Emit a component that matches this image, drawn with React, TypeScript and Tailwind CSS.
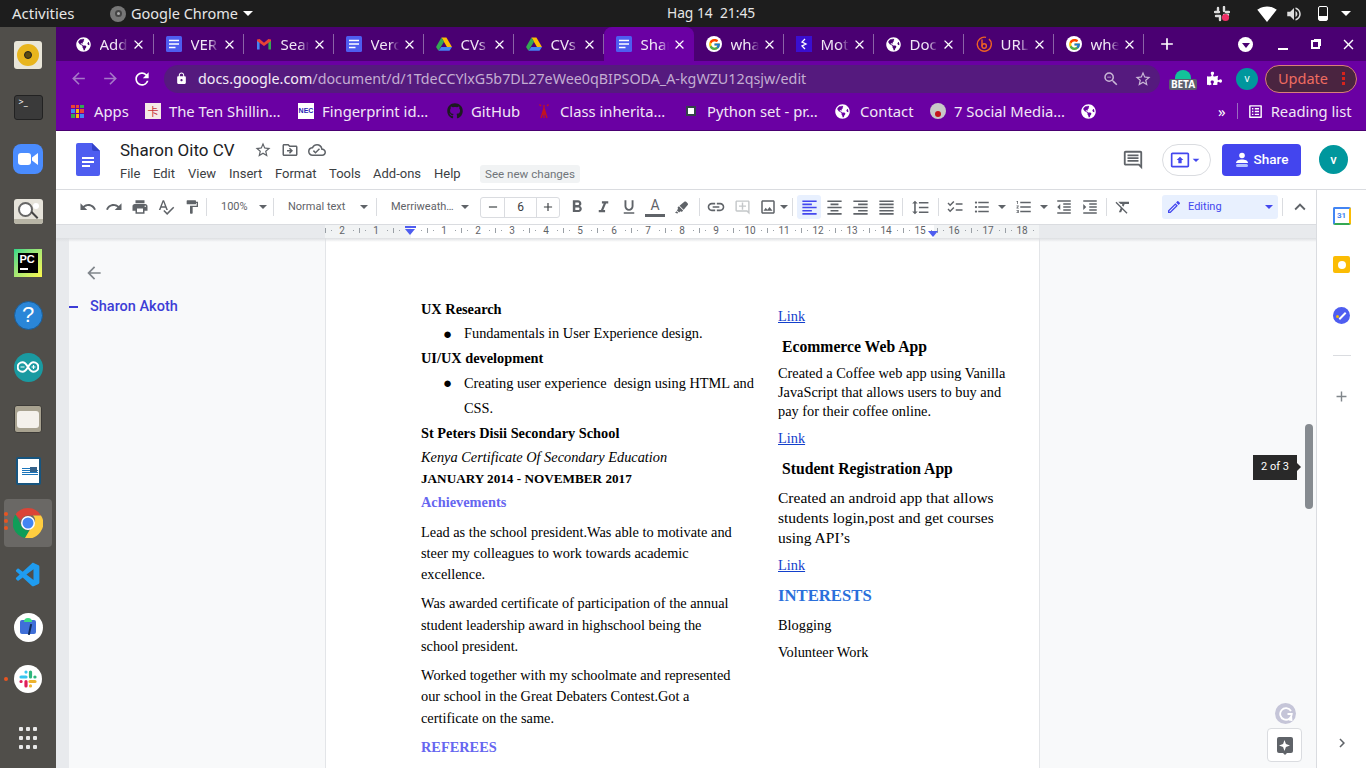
import type { ReactNode } from 'react'
import { FaGithub, FaGlobeAmericas, FaHighlighter, FaPuzzlePiece } from 'react-icons/fa'
import { FcGoogle } from 'react-icons/fc'
import { VscVscode } from 'react-icons/vsc'
import {
  MdAdd, MdArrowBack, MdArrowDropDown, MdArrowForward, MdChecklist, MdChevronRight, MdClose,
  MdExpandLess, MdFormatAlignCenter, MdFormatAlignJustify, MdFormatAlignLeft, MdFormatAlignRight,
  MdFormatBold, MdFormatClear, MdFormatIndentDecrease, MdFormatIndentIncrease, MdFormatItalic,
  MdFormatLineSpacing, MdFormatListBulleted, MdFormatListNumbered, MdFormatPaint, MdFormatUnderlined, MdLink,
  MdLock, MdOutlineAddComment, MdOutlineCloudDone, MdOutlineComment, MdOutlineDriveFileMove, MdOutlineEdit, MdOutlineImage,
  MdOutlineListAlt, MdOutlinePresentToAll, MdPrint, MdRedo, MdRefresh, MdRemove, MdSignalWifi4Bar, MdSpellcheck,
  MdStarBorder, MdUndo, MdVolumeUp, MdZoomOut,
} from 'react-icons/md'

const ubuntu = "font-['Noto_Sans',sans-serif]"

function DocsIcon({ size = 16 }: { size?: number }) {
  return (
    <svg width={size} height={size} viewBox="0 0 16 16" className="shrink-0">
      <rect width="16" height="16" rx="1.5" fill="#4e5df0" />
      <path d="M3 4.5h10M3 8h10M3 11.5h6.5" stroke="#fff" strokeWidth="1.6" />
    </svg>
  )
}

function DriveIcon() {
  return (
    <svg width="16" height="16" viewBox="0 0 16 16" className="shrink-0">
      <path d="M5.4 1.5h5L16 11h-5z" fill="#fbbc04" />
      <path d="M5.4 1.5 0 11l2.5 3.8L8 5.8z" fill="#34a853" />
      <path d="M5.3 11H16l-2.5 3.8H2.5z" fill="#4285f4" />
    </svg>
  )
}

function GmailIcon() {
  return (
    <svg width="16" height="16" viewBox="0 0 16 16" className="shrink-0">
      <path d="M1 13.5V4l2.6.6v8.9z" fill="#4285f4" />
      <path d="M15 13.5V4l-2.6.6v8.9z" fill="#34a853" />
      <path d="M1 3.4 3.6 3 8 6.8 12.4 3l2.6.4v1.5L8 10 1 4.9z" fill="#ea4335" />
    </svg>
  )
}

function Globe() {
  return <FaGlobeAmericas size={15} className="shrink-0 text-white" />
}

const tabs: { icon: ReactNode; label: string; active?: boolean }[] = [
  { icon: <Globe />, label: 'Add' },
  { icon: <DocsIcon />, label: 'VER' },
  { icon: <GmailIcon />, label: 'Sear' },
  { icon: <DocsIcon />, label: 'Verc' },
  { icon: <DriveIcon />, label: 'CVs' },
  { icon: <DriveIcon />, label: 'CVs' },
  { icon: <DocsIcon />, label: 'Shar', active: true },
  { icon: <span className="flex size-4 shrink-0 items-center justify-center rounded-full bg-white"><FcGoogle size={13} /></span>, label: 'wha' },
  {
    icon: (
      <span className="flex size-4 shrink-0 items-center justify-center bg-[#3a0fd0]">
        <svg width="8" height="12" viewBox="0 0 8 12" fill="none" stroke="#fff" strokeWidth="1.300">
          <path d="M5 1 2 4l4 2-4 2 3 3" />
        </svg>
      </span>
    ),
    label: 'Mot',
  },
  { icon: <Globe />, label: 'Doc' },
  {
    icon: (
      <svg width="16" height="16" viewBox="0 0 16 16" fill="none" stroke="#ee6123" strokeWidth="1.4" className="shrink-0">
        <path d="M13 3a7 7 0 1 1-3-1.6" />
        <path d="M6 3.5v7" />
        <circle cx="8.2" cy="10" r="2.2" />
      </svg>
    ),
    label: 'URL',
  },
  { icon: <span className="flex size-4 shrink-0 items-center justify-center rounded-full bg-white"><FcGoogle size={13} /></span>, label: 'whe' },
]

function Tab({ icon, label, active }: { icon: ReactNode; label: string; active?: boolean }) {
  return (
    <div className={`relative flex h-[34px] w-[90px] shrink-0 items-center pl-3 ${active ? 'rounded-t-lg bg-[#6a00a3]' : ''}`}>
      {icon}
      <span className="ml-[8.500px] w-7 overflow-hidden whitespace-nowrap text-[15px] text-[#f0e6f5] [mask-image:linear-gradient(90deg,#000_65%,transparent)]">
        {label}
      </span>
      <MdClose size={15} className="ml-[3.500px] text-white" />
      {!active && <span className="absolute right-0 top-[7px] h-5 w-px bg-[#8a63a6]" />}
    </div>
  )
}

function Bookmark({ icon, label, className }: { icon: ReactNode; label?: string; className: string }) {
  return (
    <div className={`flex items-center ${className}`}>
      {icon}
      {label && <span className="whitespace-nowrap text-[14.800px] text-[#f1e7f6]">{label}</span>}
    </div>
  )
}

function TopBar() {
  return (
    <div className={`flex h-[27px] shrink-0 items-center bg-[#1d1d1d] text-[14.500px] text-[#e6e6e6] ${ubuntu}`}>
      <span className="ml-3 w-[98px] text-[15px]">Activities</span>
      <span className="flex size-4 items-center justify-center rounded-full bg-[#777]">
        <span className="size-[7px] rounded-full border-2 border-[#444] bg-[#aaa]" />
      </span>
      <span className="ml-[5px]">Google Chrome</span>
      <span className="ml-[5px] size-0 border-x-[5px] border-t-[5px] border-x-transparent border-t-white" />
      <span className="ml-[408px] w-[100px] whitespace-nowrap text-center text-[13.800px]">Hag 14&nbsp; 21:45</span>
      <div className="ml-[453px] flex items-center">
        <svg width="16" height="16" viewBox="0 0 16 16" className="mr-[27px]">
          <path d="M1 6h4M4 2v3M10 1v4M12 6h3M2 10h4M6 10v4M10 9h4" stroke="#ddd" strokeWidth="2.4" strokeLinecap="round" />
          <circle cx="11.5" cy="11.5" r="3.6" fill="#ef2f66" />
        </svg>
        <MdSignalWifi4Bar size={20} className="text-white" />
        <MdVolumeUp size={18} className="ml-[8px] text-[#ddd]" />
        <span className="relative ml-[15px] h-[15px] w-[10px] rounded-[2px] border border-white">
          <span className="absolute inset-x-0 bottom-0 h-1 bg-white" />
        </span>
        <span className="ml-[13px] size-0 border-x-[5px] border-t-[5px] border-x-transparent border-t-white" />
      </div>
    </div>
  )
}

const dockClass = 'flex h-[52px] items-center justify-center relative'

function Dock() {
  return (
    <div className="flex w-14 shrink-0 flex-col bg-[#504e4a] pt-[2px]">
      <div className={dockClass}>
        <span className="flex size-7 items-center justify-center rounded-[3px] bg-[#e9e6d9]">
          <span className="flex size-[22px] items-center justify-center rounded-full bg-[#e8b51d]">
            <span className="size-2 rounded-full border border-[#222] bg-[#5b4a12]" />
          </span>
        </span>
      </div>
      <div className={dockClass}>
        <span className="h-[25px] w-[29px] rounded-[3px] border border-[#222] bg-[#3a3a3a] pl-1 text-[9px] leading-[12px] text-white">&gt;_</span>
      </div>
      <div className={dockClass}>
        <span className="flex size-[30px] items-center justify-center rounded-lg bg-[#4a8cff]">
          <svg width="20" height="12" viewBox="0 0 20 12" fill="#fff">
            <rect width="13" height="12" rx="3" />
            <path d="M14 4.5 20 0v12l-6-4.5z" />
          </svg>
        </span>
      </div>
      <div className={dockClass}>
        <span className="relative flex h-[25px] w-[29px] items-center rounded-[3px] bg-[#e6e3da] pl-[4px]">
          <span className="mb-[3px] size-[15px] rounded-full border-2 border-[#666] bg-white" />
          <span className="absolute left-[16px] top-[15px] h-[2px] w-[9px] rotate-45 bg-[#444]" />
          <span className="absolute right-1 top-1 size-[6px] rounded-full bg-white" />
          <span className="absolute bottom-0 left-0 h-[5px] w-full rounded-b-[3px] bg-[#b8b5a6]" />
        </span>
      </div>
      <div className={dockClass}>
        <span className="flex size-7 items-center justify-center bg-gradient-to-br from-[#21d789] to-[#fcf84a] pr-[1px]">
          <span className="flex size-5 flex-col bg-black pl-[2px] font-['Liberation_Sans',sans-serif] text-[11px] font-bold leading-[13px] text-white">
            PC
            <span className="mt-[2px] h-[1.5px] w-2 bg-white" />
          </span>
        </span>
      </div>
      <div className={dockClass}>
        <span className="flex size-[29px] items-center justify-center rounded-full border border-[#1c5c94] bg-[#2a86d8] font-['Liberation_Sans',sans-serif] text-[22px] leading-none text-white">?</span>
      </div>
      <div className={dockClass}>
        <span className="flex size-[29px] items-center justify-center rounded-full bg-[#1a9aa1]">
          <svg width="22" height="12" viewBox="0 0 22 12" fill="none" stroke="#fff" strokeWidth="2">
            <path d="M11 6C9 2.5 7.5 1.2 5.5 1.2a4.8 4.8 0 0 0 0 9.6C7.5 10.8 9 9.5 11 6c2-3.5 3.5-4.8 5.5-4.8a4.8 4.8 0 0 1 0 9.6C14.500 10.800 13 9.500 11 6z" />
            <path d="M3.500 6h4M14.500 6h4M16.500 4v4" strokeWidth="1.200" />
          </svg>
        </span>
      </div>
      <div className={dockClass}>
        <span className="flex h-7 w-7 items-center justify-center rounded-[3px] border border-[#3d3b38] bg-[#a8a290]">
          <span className="h-[17px] w-[22px] rounded-[3px] bg-[#f4f1ec]" />
        </span>
      </div>
      <div className={dockClass}>
        <span className="relative flex h-7 w-[25px] flex-col justify-center gap-[1px] rounded-[2px] border-2 border-[#17557f] bg-white pl-1">
          <span className="h-px w-2 bg-[#1b75bb]" />
          <span className="h-px w-4 bg-[#1b75bb]" />
          <span className="h-px w-4 bg-[#1b75bb]" />
          <span className="h-px w-4 bg-[#1b75bb]" />
          <span className="absolute right-[2px] top-2 h-[5px] w-[7px] bg-[#33618a]" />
        </span>
      </div>
      <div className={dockClass}>
        <span className="absolute inset-x-1 inset-y-[2px] rounded-[4px] bg-white/15" />
        <span className="absolute left-1 top-[15px] flex flex-col gap-[3px]">
          <i className="size-1 rounded-full bg-[#e95420]" />
          <i className="size-1 rounded-full bg-[#e95420]" />
          <i className="size-1 rounded-full bg-[#e95420]" />
        </span>
        <svg width="30" height="30" viewBox="0 0 30 30" className="relative">
          <path d="M15 0a15 15 0 0 1 13 7.500H15a7.500 7.500 0 0 0-7 4.700L2.500 6.500A15 15 0 0 1 15 0z" fill="#db4437" />
          <path d="M2.500 6.500 8.800 18.500a7.500 7.500 0 0 0 7.500 3.900L12 30A15 15 0 0 1 2.500 6.500z" fill="#0f9d58" />
          <path d="M28 7.500A15 15 0 0 1 12 30l6.300-10.800A7.500 7.500 0 0 0 20 7.500z" fill="#ffcd40" />
          <circle cx="15" cy="15" r="7" fill="#fff" />
          <circle cx="15" cy="15" r="5.500" fill="#4285f4" />
        </svg>
      </div>
      <div className={dockClass}>
        <VscVscode size={29} className="text-[#1f9cf0]" />
      </div>
      <div className={dockClass}>
        <span className="relative flex size-[29px] items-center justify-center rounded-full bg-white">
          <span className="h-[14px] w-4 rounded-[2px] bg-[#3f6fd8]" />
          <span className="absolute top-[5px] h-1 w-2 rounded-t-full bg-[#3ddc84]" />
          <span className="absolute left-[15px] top-[11px] h-[11px] w-[2px] rotate-12 bg-[#0d2a5c]" />
        </span>
      </div>
      <div className={dockClass}>
        <span className="absolute left-1 size-1 rounded-full bg-[#e95420]" />
        <span className="flex size-[28px] items-center justify-center rounded-full bg-white">
          <svg width="18" height="18" viewBox="0 0 18 18" strokeWidth="3.200" strokeLinecap="round">
            <path d="M7 2v.1M2 7h5" stroke="#36c5f0" />
            <path d="M11.500 2v5M16 7h-.1" stroke="#2eb67d" />
            <path d="M16 11.500h-5M11.500 16v-.1" stroke="#ecb22e" />
            <path d="M7 11.500V16M2 11.500h.1" stroke="#e01e5a" />
          </svg>
        </span>
      </div>
      <div className="mt-auto mb-[19px] grid w-full grid-cols-3 justify-items-center gap-y-[5px] px-[18px]">
        {Array.from({ length: 9 }).map((_, i) => (
          <span key={i} className="size-1 rounded-[1px] bg-[#e8e8e8]" />
        ))}
      </div>
    </div>
  )
}

function ChromeBars() {
  return (
    <div className={ubuntu}>
      <div className="flex h-[34px] items-center bg-[#4a0072] pl-2">
        {tabs.map((t, i) => (
          <Tab key={i} icon={t.icon} label={t.label} active={t.active} />
        ))}
        <MdAdd size={20} className="ml-[13px] text-white" />
        <span className="ml-[61px] flex size-[15px] items-center justify-center rounded-full bg-white">
          <span className="mt-[2px] size-0 border-x-[4px] border-t-[5px] border-x-transparent border-t-[#4a0072]" />
        </span>
        <span className="ml-[25px] mt-[10px] h-[2px] w-[10px] bg-white" />
        <span className="relative ml-[23px] size-[9px] border-2 border-white">
          <span className="absolute -right-[3px] -top-[3px] size-[7px] border-r-2 border-t-2 border-white" />
        </span>
        <MdClose size={17} className="ml-[20px] text-white" />
      </div>
      <div className="flex h-[33px] items-center bg-[#6a00a3] pl-[13px] pt-[2px]">
        <MdArrowBack size={19} className="text-[#a678c8]" />
        <MdArrowForward size={19} className="ml-[13px] text-[#a678c8]" />
        <MdRefresh size={20} className="ml-[12px] text-white" />
        <div className="ml-3 flex h-[28px] w-[996px] items-center rounded-full bg-[#551a7e] pl-[11px] text-[14.300px]">
          <MdLock size={13} className="text-white" />
          <span className="ml-[10px] whitespace-nowrap text-[#f3ecf7]">docs.google.com</span>
          <span className="whitespace-nowrap text-[#c3aed2]">/document/d/1TdeCCYlxG5b7DL27eWee0qBIPSODA_A-kgWZU12qsjw/edit</span>
          <span className="flex-1" />
          <MdZoomOut size={18} className="text-[#c9b7d6]" />
          <MdStarBorder size={18} className="ml-[14px] mr-2 text-[#c9b7d6]" />
        </div>
        <span className="relative ml-[13px] flex w-5 justify-center">
          <span className="h-[17px] w-4 rounded-t-full bg-[#12c39a]" />
          <span className="absolute -bottom-[3px] rounded-[2px] bg-[#5b5f6e] px-[2px] text-[10px] font-bold leading-[11px] text-white">BETA</span>
        </span>
        <FaPuzzlePiece size={15} className="ml-[14px] text-white" />
        <span className="ml-[14px] flex size-[22px] items-center justify-center rounded-full bg-[#00979d] text-[10px] text-white">v</span>
        <span className="ml-[7px] flex h-[28px] w-[92px] items-center rounded-full border border-[#d97f78] bg-[#4a2440] pl-3 text-[14.500px] text-[#ef6c61]">
          Update
          <span className="ml-[14px] flex flex-col gap-[2px]">
            <i className="size-[3px] bg-[#d8231c]" />
            <i className="size-[3px] bg-[#d8231c]" />
            <i className="size-[3px] bg-[#d8231c]" />
          </span>
        </span>
      </div>
      <div className="flex h-[36px] items-center bg-[#6a00a3] pb-[2px] pl-[15px]">
        <Bookmark
          className="w-[74px]"
          icon={
            <span className="mr-[10px] grid size-[13px] grid-cols-3 gap-[1px]">
              {['#ea4335', '#ea4335', '#34a853', '#4285f4', '#fbbc04', '#ea4335', '#34a853', '#fbbc04', '#4285f4'].map((c, i) => (
                <i key={i} style={{ background: c }} />
              ))}
            </span>
          }
          label="Apps"
        />
        <Bookmark className="w-[153px]" icon={<span className="mr-2 flex size-4 items-center justify-center bg-[#f6e9e6] font-['Noto_Sans_CJK_SC',sans-serif] text-[11px] text-[#c8333a]">卡</span>} label="The Ten Shillin…" />
        <Bookmark className="w-[149px]" icon={<span className="mr-2 flex size-4 items-center justify-center bg-white font-['Liberation_Sans',sans-serif] text-[7px] font-bold text-[#2a1fb5]">NEC</span>} label="Fingerprint id…" />
        <Bookmark className="w-[89px]" icon={<FaGithub size={16} className="mr-2 text-[#1b1b1f]" />} label="GitHub" />
        <Bookmark
          className="w-[147px]"
          icon={
            <svg width="16" height="16" viewBox="0 0 16 16" fill="none" stroke="#c4141c" strokeWidth="1.300" className="mr-2">
              <path d="M8 2v13M8 5 5 15M8 5l3 10M5 3 3.500 1.500M11 3l1.500-1.500M6 11h4" />
            </svg>
          }
          label="Class inherita…"
        />
        <Bookmark
          className="w-[152px]"
          icon={
            <span className="mr-2 flex size-4 items-center justify-center">
              <span className="size-[10px] border-2 border-[#33424a] bg-white" />
            </span>
          }
          label="Python set - pr…"
        />
        <Bookmark className="w-[95px]" icon={<span className="mr-[10px]"><Globe /></span>} label="Contact" />
        <Bookmark
          className="w-[151px]"
          icon={
            <span className="mr-2 flex size-4 items-end justify-center rounded-full bg-[#c8c8c8]">
              <span className="mb-[2px] size-[6px] rounded-full bg-[#c4141c]" />
            </span>
          }
          label="7 Social Media…"
        />
        <Globe />
        <span className="ml-[122px] text-[15px] leading-none text-white">»</span>
        <span className="ml-[11px] h-4 w-px bg-[#9a6cc0]" />
        <MdOutlineListAlt size={17} className="ml-[9px] text-white" />
        <span className="ml-[7px] whitespace-nowrap text-[14.800px] text-[#f1e7f6]">Reading list</span>
      </div>
    </div>
  )
}

const menus: [string, string][] = [
  ['File', 'w-[33px]'],
  ['Edit', 'w-[35px]'],
  ['View', 'w-[41px]'],
  ['Insert', 'w-[46px]'],
  ['Format', 'w-[54px]'],
  ['Tools', 'w-[44px]'],
  ['Add-ons', 'w-[61px]'],
  ['Help', 'w-[46px]'],
]

function DocsHeader() {
  return (
    <div className="flex h-[60px] shrink-0 items-center border-b border-t border-b-[#dadce0] border-t-[#4a0072] bg-white pb-px pl-5 font-['Roboto',sans-serif]">
      <svg width="24" height="33" viewBox="0 0 24 33" className="shrink-0">
        <path d="M2 0h14l8 8v23a2 2 0 0 1-2 2H2a2 2 0 0 1-2-2V2a2 2 0 0 1 2-2z" fill="#4e5df0" />
        <path d="M16 0l8 8h-6a2 2 0 0 1-2-2z" fill="#3343c9" />
        <path d="M6 15h12M6 19h12M6 23h8" stroke="#fff" strokeWidth="1.800" />
      </svg>
      <div className="ml-5 flex flex-col pt-[2px]">
        <div className="flex items-center">
          <span className="w-[133px] text-[17px] leading-6 text-[#202124]">Sharon Oito CV</span>
          <MdStarBorder size={18} className="ml-[1px] text-[#5f6368]" />
          <MdOutlineDriveFileMove size={18} className="ml-[9px] text-[#5f6368]" />
          <MdOutlineCloudDone size={18} className="ml-[9px] text-[#5f6368]" />
        </div>
        <div className="mt-[3px] flex h-[18px] items-center text-[13px] text-[#3c4043]">
          {menus.map(([m, w]) => (
            <span key={m} className={w}>{m}</span>
          ))}
          <span className="whitespace-nowrap rounded-[3px] bg-[#f1f3f4] px-[5px] py-[2px] text-[11.600px] leading-[14px] text-[#70757a]">See new changes</span>
        </div>
      </div>
      <div className="ml-auto flex items-center">
        <MdOutlineComment size={22} className="text-[#5f6368]" />
        <span className="ml-[18px] flex h-8 w-[49px] items-center justify-center rounded-full border border-[#dadce0]">
          <MdOutlinePresentToAll size={20} className="text-[#4347ee]" />
          <MdArrowDropDown size={16} className="-ml-[2px] text-[#4347ee]" />
        </span>
        <span className="ml-[11px] flex h-8 w-[79px] items-center justify-center gap-[5px] rounded-[4px] bg-[#4345ee] text-[13.500px] font-medium text-white">
          <svg width="14" height="16" viewBox="0 0 14 16" fill="#fff">
            <circle cx="7" cy="3.500" r="2.800" />
            <path d="M1 11c0-2.400 3-3.500 6-3.500s6 1.100 6 3.500z" />
            <rect x="1" y="12" width="12" height="3" rx="1.500" fill="#b5c3ff" />
          </svg>
          Share
        </span>
        <span className="ml-[18px] mr-[18px] flex size-[29px] items-center justify-center rounded-full bg-[#00979d] text-[13px] font-medium text-white">v</span>
      </div>
    </div>
  )
}

function TBtn({ children, className = 'w-[26px]' }: { children: ReactNode; className?: string }) {
  return <span className={`flex h-6 shrink-0 items-center justify-center text-[#5f6368] ${className}`}>{children}</span>
}

function Sep({ className = '' }: { className?: string }) {
  return <span className={`h-[18px] w-px shrink-0 bg-[#dadce0] ${className}`} />
}

function Caret({ className = '' }: { className?: string }) {
  return <span className={`size-0 shrink-0 border-x-[4px] border-t-[4px] border-x-transparent border-t-[#5f6368] ${className}`} />
}

function Toolbar() {
  return (
    <div className="flex h-[34px] shrink-0 items-center pl-[19px] font-['Roboto',sans-serif] text-[11px] text-[#5f6368]">
      <TBtn><MdUndo size={18} /></TBtn>
      <TBtn><MdRedo size={18} /></TBtn>
      <TBtn><MdPrint size={18} /></TBtn>
      <TBtn><MdSpellcheck size={18} /></TBtn>
      <TBtn><MdFormatPaint size={16} /></TBtn>
      <Sep className="ml-[1px]" />
      <span className="flex w-[66px] items-center pl-[14px]">100%<Caret className="ml-[11px]" /></span>
      <Sep />
      <span className="flex w-[102px] items-center whitespace-nowrap pl-[14px]">Normal text<Caret className="ml-[15px]" /></span>
      <Sep />
      <span className="flex w-[99px] items-center whitespace-nowrap pl-[14px]">Merriweath…<Caret className="ml-[7px]" /></span>
      <span className="ml-[4px] flex h-[21px] w-[80px] items-center rounded-[3px] border border-[#dadce0] text-[12px] text-[#3c4043]">
        <span className="flex h-full w-6 items-center justify-center border-r border-[#dadce0]"><MdRemove size={14} /></span>
        <span className="flex-1 text-center">6</span>
        <span className="flex h-full w-[23px] items-center justify-center border-l border-[#dadce0]"><MdAdd size={14} /></span>
      </span>
      <span className="w-1" />
      <TBtn><MdFormatBold size={20} /></TBtn>
      <TBtn><MdFormatItalic size={19} /></TBtn>
      <TBtn><MdFormatUnderlined size={18} /></TBtn>
      <span className="flex w-[26px] flex-col items-center text-[14px] leading-[15px] text-[#5f6368]">
        A
        <span className="mt-[1px] h-[3px] w-5 bg-[#5f6368]" />
      </span>
      <TBtn><FaHighlighter size={13} /></TBtn>
      <Sep className="ml-[5px] mr-[3px]" />
      <TBtn><MdLink size={20} /></TBtn>
      <TBtn><MdOutlineAddComment size={17} className="text-[#c4c7c9]" /></TBtn>
      <TBtn className="w-[36px]"><MdOutlineImage size={18} /><Caret className="ml-[3px]" /></TBtn>
      <Sep className="ml-[1px] mr-[4px]" />
      <span className="flex h-6 w-6 shrink-0 items-center justify-center rounded-[3px] bg-[#e8f0fe] text-[#4347ee]"><MdFormatAlignLeft size={19} /></span>
      <TBtn><MdFormatAlignCenter size={19} /></TBtn>
      <TBtn><MdFormatAlignRight size={19} /></TBtn>
      <TBtn><MdFormatAlignJustify size={19} /></TBtn>
      <Sep className="ml-[3px] mr-[4px]" />
      <TBtn><MdFormatLineSpacing size={19} /></TBtn>
      <Sep className="ml-[5px] mr-[3px]" />
      <TBtn><MdChecklist size={18} /></TBtn>
      <TBtn className="w-[42px]"><MdFormatListBulleted size={18} /><Caret className="ml-[7px]" /></TBtn>
      <TBtn className="w-[42px]"><MdFormatListNumbered size={18} /><Caret className="ml-[7px]" /></TBtn>
      <TBtn className="-ml-px w-[26px]"><MdFormatIndentDecrease size={18} /></TBtn>
      <TBtn><MdFormatIndentIncrease size={18} /></TBtn>
      <Sep className="ml-[3px] mr-[3px]" />
      <TBtn><MdFormatClear size={18} /></TBtn>
      <span className="ml-[26px] flex h-6 w-[116px] shrink-0 items-center rounded-[3px] bg-[#e8f0fe] pl-[4px] text-[#4347ee]">
        <MdOutlineEdit size={16} />
        <span className="ml-[6px] text-[11px]">Editing</span>
        <span className="ml-auto mr-[5px] size-0 border-x-[4px] border-t-[4px] border-x-transparent border-t-[#4347ee]" />
      </span>
      <Sep className="ml-[4px]" />
      <TBtn className="ml-[4px] w-[26px]"><MdExpandLess size={22} /></TBtn>
    </div>
  )
}

const rulerCells = ['2', '1', '', '1', '2', '3', '4', '5', '6', '7', '8', '9', '10', '11', '12', '13', '14', '15', '16', '17', '18']

function Ruler() {
  return (
    <div className="relative flex h-[14px] shrink-0 border-t border-[#dadce0] bg-[#e8eaed] font-['Roboto',sans-serif] text-[10px] leading-[11px] text-[#5f6368]">
      <div className="ml-[269px] flex w-[714px] items-start bg-[linear-gradient(90deg,#f1f3f4_86px,#fff_86px,#fff_609px,#f1f3f4_609px)]">
        {rulerCells.map((n, i) => (
          <div key={i} className="flex h-[11px] w-[34px] items-center justify-between">
            <i className="h-[5px] w-px bg-[#9aa0a6]" />
            <i className="size-px bg-[#9aa0a6]" />
            <span className="w-3 text-center">{n}</span>
            <i className="size-px bg-[#9aa0a6]" />
            <span className="w-px" />
          </div>
        ))}
      </div>
      <span className="absolute left-[349px] top-[1px] h-[2px] w-[11px] bg-[#4e5df0]" />
      <span className="absolute left-[349px] top-[4px] size-0 border-x-[5.5px] border-t-[6px] border-x-transparent border-t-[#4e5df0]" />
      <span className="absolute left-[872px] top-[6px] size-0 border-x-[5.5px] border-t-[6px] border-x-transparent border-t-[#4e5df0]" />
    </div>
  )
}

const body = 'text-[14.350px] text-black'

function LeftColumn() {
  return (
    <div className={`w-[357px] shrink-0 pt-[59px] ${body}`}>
      <p className="font-bold leading-6">UX Research</p>
      <div className="mt-px flex h-6 items-center">
        <span className="ml-[22px] w-[21px] text-[15px]">●</span>
        <span>Fundamentals in User Experience design.</span>
      </div>
      <p className="font-bold leading-6">UI/UX development</p>
      <div className="mt-px flex leading-[25px]">
        <span className="ml-[22px] w-[21px] shrink-0 text-[15px]">●</span>
        <span>Creating user experience&nbsp; design using HTML and CSS.</span>
      </div>
      <p className="font-bold leading-[25px]">St Peters Disii Secondary School</p>
      <p className="-mt-px italic leading-6">Kenya Certificate Of Secondary Education</p>
      <p className="mt-px text-[13.200px] font-bold leading-[18px]">JANUARY 2014 - NOVEMBER 2017</p>
      <p className="mt-[2px] font-bold leading-6 text-[#6666f0]">Achievements</p>
      <p className="mt-[8px] w-[320px] leading-[21px]">Lead as the school president.Was able to motivate and steer my colleagues to work towards academic excellence.</p>
      <p className="mt-2 w-[320px] leading-[21.500px]">Was awarded certificate of participation of the annual student leadership award in highschool being the school president.</p>
      <p className="mt-[7px] w-[320px] leading-[21.500px]">Worked together with my schoolmate and represented our school in the Great Debaters Contest.Got a certificate on the same.</p>
      <p className="mt-[6px] font-bold leading-6 text-[#6666f0]">REFEREES</p>
    </div>
  )
}

function DocLink() {
  return <a className="text-[#1340cc] underline">Link</a>
}

function RightColumn() {
  return (
    <div className={`w-[240px] shrink-0 pt-[69px] ${body}`}>
      <p className="leading-[18px]"><DocLink /></p>
      <p className="ml-1 mt-[10px] text-[15.700px] font-bold leading-6">Ecommerce Web App</p>
      <p className="mt-[5px] w-[232px] leading-[19px]">Created a Coffee web app using Vanilla JavaScript that allows users to buy and pay for their coffee online.</p>
      <p className="mt-[8px] leading-[18px]"><DocLink /></p>
      <p className="ml-1 mt-[10px] text-[15.700px] font-bold leading-6">Student Registration App</p>
      <p className="mt-[7px] w-[232px] text-[15.500px] leading-[20px]">Created an android app that allows students login,post and get courses using API’s</p>
      <p className="mt-[8px] leading-[18px]"><DocLink /></p>
      <p className="mt-[10px] text-[16.700px] font-bold leading-6 text-[#2a6fdb]">INTERESTS</p>
      <p className="mt-[7px] leading-5">Blogging</p>
      <p className="mt-[7px] leading-5">Volunteer Work</p>
    </div>
  )
}

function DocArea() {
  return (
    <div className="relative flex min-h-0 flex-1 overflow-hidden bg-[#f8f9fa]">
      <div className="w-[13px] shrink-0 bg-[#e8eaed]" />
      <div className="w-[256px] shrink-0 font-['Roboto',sans-serif]">
        <MdArrowBack size={20} className="ml-[15px] mt-[25px] text-[#80868b]" />
        <div className="mt-[13px] flex items-center">
          <span className="h-[2px] w-[9px] bg-[#3d3dd6]" />
          <span className="ml-3 text-[14.500px] font-medium text-[#3d3dd6]">Sharon Akoth</span>
        </div>
      </div>
      <div className="flex w-[715px] shrink-0 border-x border-[#e3e5e8] bg-white pl-[95px] font-['Liberation_Serif',serif]">
        <LeftColumn />
        <RightColumn />
      </div>
      <div className="absolute inset-x-0 top-0 h-[4px] bg-gradient-to-b from-[#dcdee1] to-transparent" />
      <span className="absolute left-[1249px] top-[186px] h-[85px] w-2 rounded-full bg-[#868b90]" />
      <span className="absolute left-[1197px] top-[217px] flex h-[25px] w-[44px] items-center justify-center bg-[#292929] font-['Roboto',sans-serif] text-[11px] text-white">
        2 of 3
        <span className="absolute -right-1 top-2 size-0 border-y-[4.5px] border-l-[4px] border-y-transparent border-l-[#292929]" />
      </span>
      <span className="absolute left-[1219px] top-[465px] flex size-[21px] items-center justify-center rounded-full bg-[#c5c5d8]">
        <svg width="14" height="14" viewBox="0 0 14 14" fill="none" stroke="#fff" strokeWidth="1.800">
          <path d="M12 4A5.800 5.800 0 1 0 12.800 7H8.500M10 12.500l2.500.5-.3-3" />
        </svg>
      </span>
      <span className="absolute left-[1211px] top-[490px] flex h-[34px] w-[35px] items-center justify-center rounded-[4px] border border-[#dadce0] bg-white">
        <span className="relative flex size-4 items-center justify-center rounded-[2px] bg-[#5f6368]">
          <svg width="11" height="11" viewBox="0 0 10 10" fill="#fff">
            <path d="M5 0 6.300 3.700 10 5 6.300 6.300 5 10 3.700 6.300 0 5l3.700-1.300z" />
          </svg>
          <span className="absolute -bottom-[2px] size-0 border-x-[3px] border-t-[3px] border-x-transparent border-t-[#5f6368]" />
        </span>
      </span>
    </div>
  )
}

function SidePanel() {
  return (
    <div className="flex w-[50px] shrink-0 flex-col items-center border-l border-[#dadce0] bg-white pt-[17px]">
      <span className="relative flex size-[18px] items-center justify-center rounded-[2px] border-2 border-b-[#34a853] border-l-[#4285f4] border-r-[#fbbc04] border-t-[#4285f4] bg-white font-['Roboto',sans-serif] text-[8px] font-bold text-[#4285f4]">31</span>
      <span className="mt-[31px] flex size-[17px] items-center justify-center rounded-[2px] bg-[#fbbc04]">
        <span className="size-2 rounded-full bg-white" />
      </span>
      <span className="relative mt-[34px] flex size-[17px] items-center justify-center rounded-full bg-[#4e5df0]">
        <span className="ml-[2px] h-[2px] w-[9px] -rotate-45 bg-white" />
        <span className="absolute left-[3px] top-[8px] size-[3px] rounded-full bg-[#fbbc04]" />
      </span>
      <span className="mt-[31px] h-px w-[18px] bg-[#dadce0]" />
      <MdAdd size={17} className="mt-[32px] text-[#80868b]" />
      <MdChevronRight size={18} className="mt-auto mb-[16px] text-[#5f6368]" />
    </div>
  )
}

export default function App() {
  return (
    <div className="flex h-[768px] w-[1366px] flex-col overflow-hidden bg-white">
      <TopBar />
      <div className="flex min-h-0 flex-1">
        <Dock />
        <div className="flex min-w-0 flex-1 flex-col">
          <ChromeBars />
          <DocsHeader />
          <div className="flex min-h-0 flex-1">
            <div className="flex min-w-0 flex-1 flex-col">
              <Toolbar />
              <Ruler />
              <DocArea />
            </div>
            <SidePanel />
          </div>
        </div>
      </div>
    </div>
  )
}
